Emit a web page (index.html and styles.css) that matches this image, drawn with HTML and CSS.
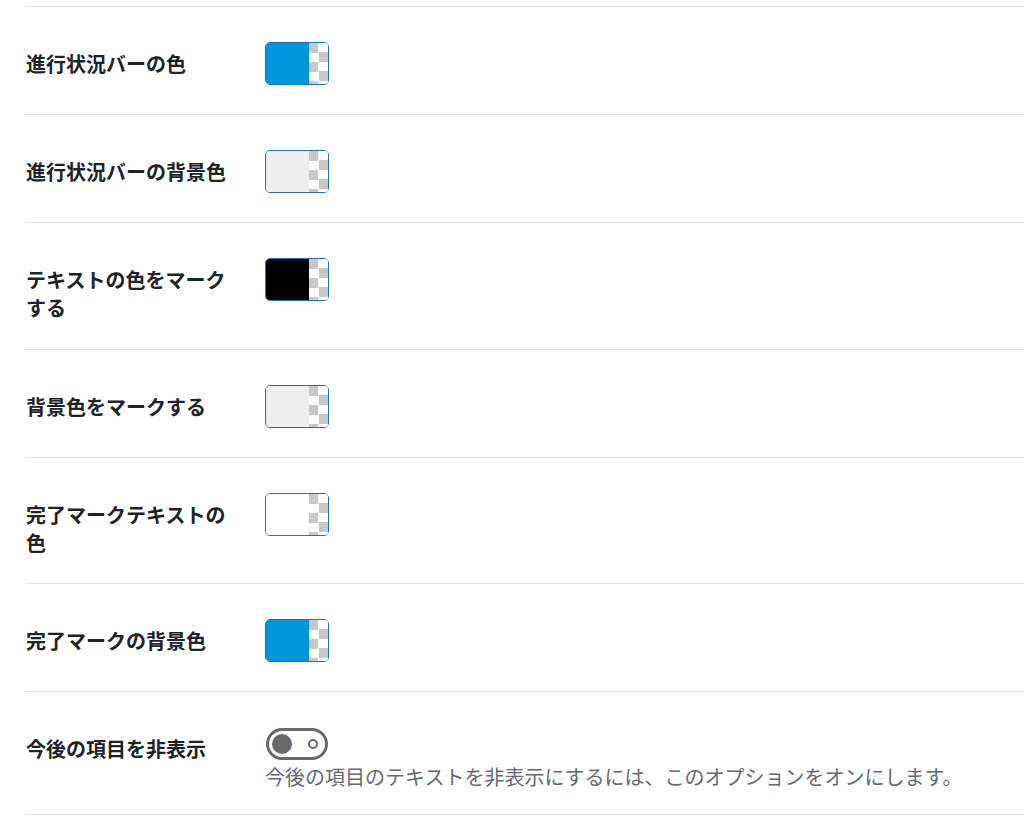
FILE: index.html
```html
<!DOCTYPE html>
<html lang="ja">
<head>
    <meta charset="UTF-8">
    <meta name="viewport" content="width=device-width, initial-scale=1.0">
    <title>設定</title>
    <link rel="stylesheet" href="styles.css">
</head>
<body>

    <div class="settings">
        <div class="row">
            <div class="label">進行状況バーの色</div>
            <div class="field">
                <button class="swatch"><span class="fill blue"></span><span class="alpha"></span></button>
            </div>
        </div>
        <div class="row">
            <div class="label">進行状況バーの背景色</div>
            <div class="field">
                <button class="swatch"><span class="fill light"></span><span class="alpha"></span></button>
            </div>
        </div>
        <div class="row">
            <div class="label">テキストの色をマークする</div>
            <div class="field">
                <button class="swatch"><span class="fill black"></span><span class="alpha"></span></button>
            </div>
        </div>
        <div class="row">
            <div class="label">背景色をマークする</div>
            <div class="field">
                <button class="swatch"><span class="fill light"></span><span class="alpha"></span></button>
            </div>
        </div>
        <div class="row">
            <div class="label">完了マークテキストの色</div>
            <div class="field">
                <button class="swatch"><span class="fill white"></span><span class="alpha"></span></button>
            </div>
        </div>
        <div class="row">
            <div class="label">完了マークの背景色</div>
            <div class="field">
                <button class="swatch"><span class="fill blue"></span><span class="alpha"></span></button>
            </div>
        </div>
        <div class="row row-toggle">
            <div class="label">今後の項目を非表示</div>
            <div class="field">
                <div class="toggle"><span class="knob"></span><span class="ring"></span></div>
                <p class="description">今後の項目のテキストを非表示にするには、このオプションをオンにします。</p>
            </div>
        </div>
    </div>

</body>
</html>
```

FILE: styles.css
```css
/* Reset */
* {
    margin: 0;
    padding: 0;
    box-sizing: border-box;
}

body {
    font-family: 'Noto Sans CJK JP', 'Noto Sans', sans-serif;
    background-color: #fff;
    color: #1d2327;
    font-size: 20px;
}

.settings {
    padding: 6px 0 0 25px;
}

.row {
    display: flex;
    align-items: flex-start;
    border-top: 1px solid #e4e4e4;
}

.row:last-child {
    border-bottom: 1px solid #e4e4e4;
}

.label {
    width: 240px;
    padding: 43px 34px 26.3px 1px;
    font-weight: 700;
    line-height: 28px;
}

.field {
    padding: 35px 0 29.2px;
}

/* Color picker button */
.swatch {
    display: flex;
    width: 64px;
    height: 43px;
    border: 1px solid #2271b1;
    border-radius: 5px;
    overflow: hidden;
    background: #fff;
    cursor: pointer;
}

.fill {
    flex: 1;
}

.fill.blue {
    background-color: #0096dc;
}

.fill.light {
    background-color: #eeeeee;
}

.fill.black {
    background-color: #000;
}

.fill.white {
    background-color: #fff;
}

.alpha {
    width: 19px;
    background-color: #fff;
    background-image: conic-gradient(#fff 25%, #c8c8c8 0 50%, #fff 0 75%, #c8c8c8 0);
    background-size: 19px 19px;
}

/* Toggle */
.toggle {
    display: flex;
    align-items: center;
    justify-content: space-between;
    width: 62px;
    height: 32px;
    margin: 1px 0 0 1px;
    padding: 0 7px 0 3px;
    border: 3px solid #646970;
    border-radius: 16px;
}

.knob {
    width: 20px;
    height: 20px;
    border-radius: 50%;
    background-color: #646970;
}

.ring {
    width: 10px;
    height: 10px;
    border: 2.5px solid #646970;
    border-radius: 50%;
}

.description {
    margin-top: 4px;
    color: #646970;
    line-height: 25px;
}

.row-toggle .field {
    padding-bottom: 25px;
}
```
